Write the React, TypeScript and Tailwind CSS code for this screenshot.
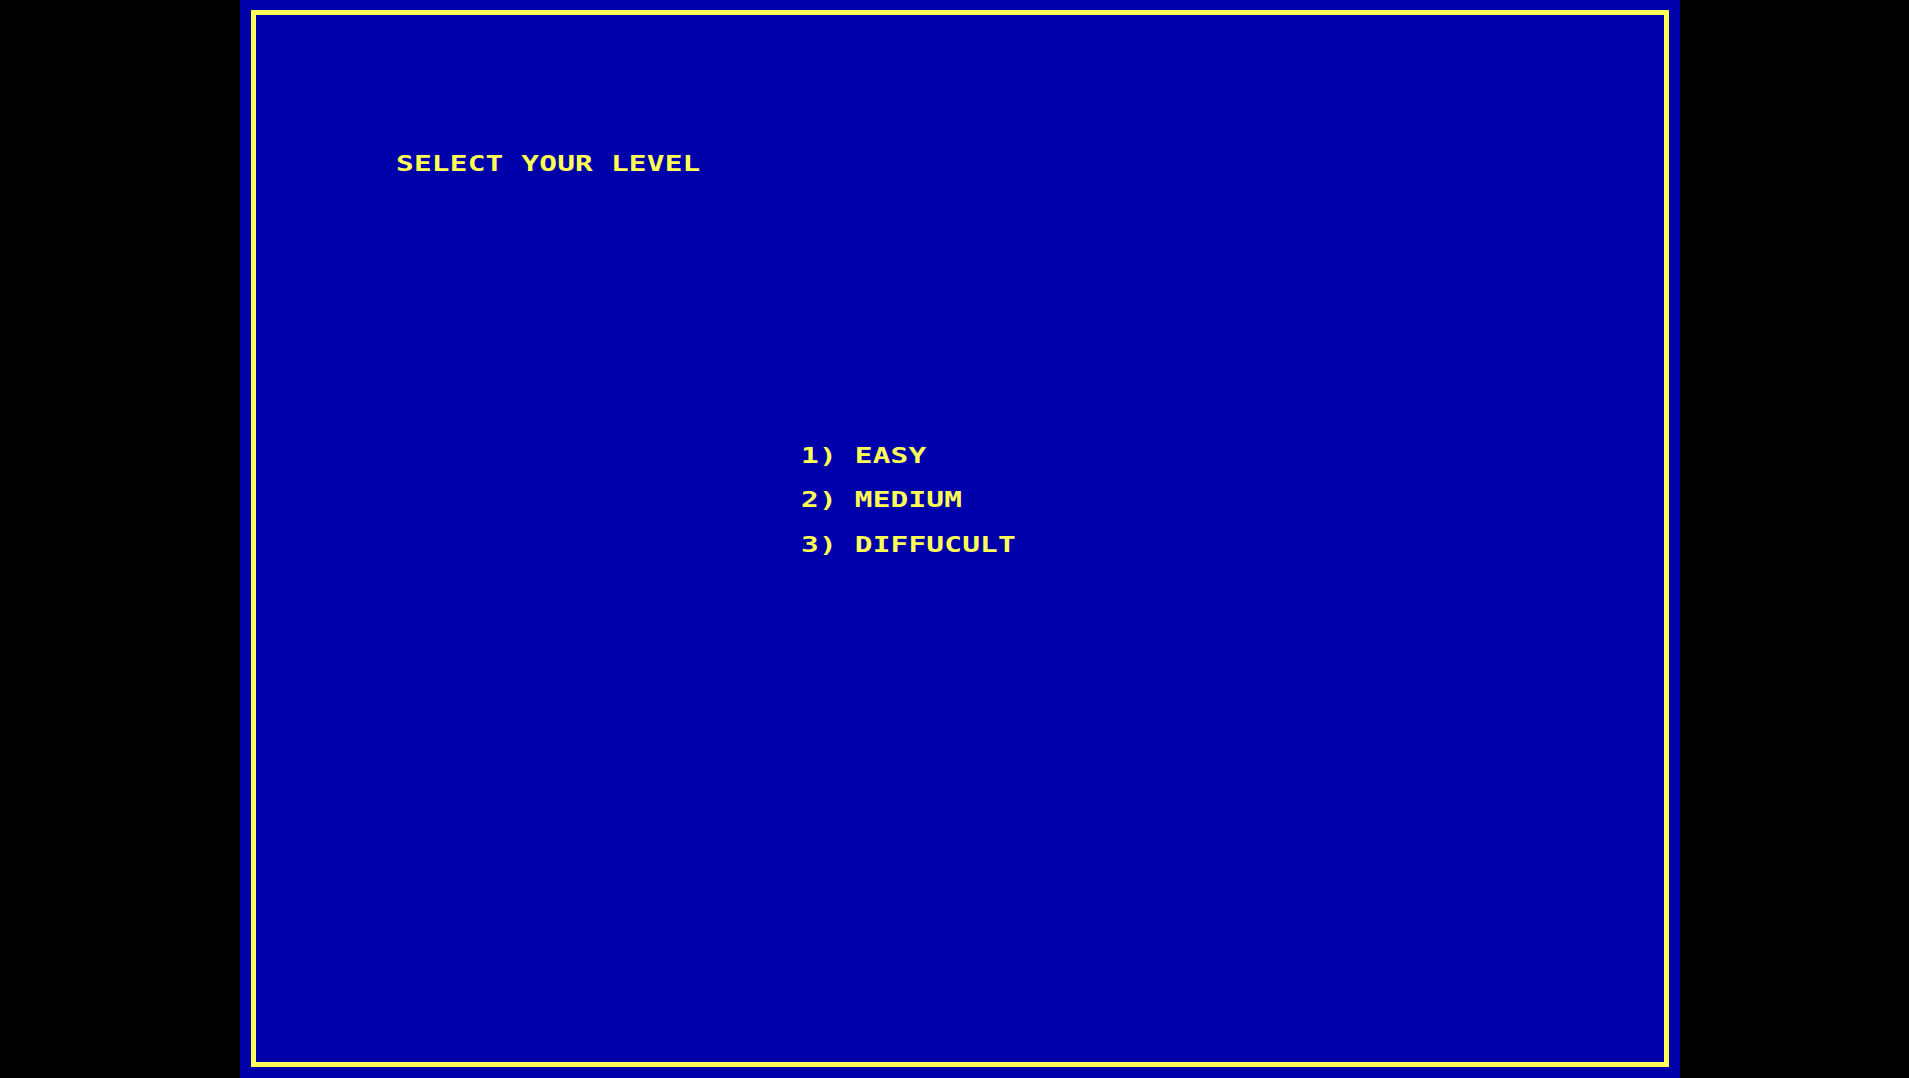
const LEVELS = ["1) EASY", "2) MEDIUM", "3) DIFFUCULT"];

const Line = ({ text }: { text: string }) => (
  <div className="h-[44.5px] leading-[44px] whitespace-pre">
    <span className="inline-block origin-left scale-x-[1.4] tracking-[0.15px]">{text}</span>
  </div>
);

export default function App() {
  return (
    <div className="w-full h-[1078px] bg-black overflow-hidden">
      <div className="ml-[240px] w-[1440px] h-full bg-[#0000aa] pt-[10px] px-[11px] pb-[11px]">
        <div
          className="h-full border-[5px] border-[#ffff55] text-[#ffff55] text-[21px] font-bold"
          style={{ fontFamily: '"DejaVu Sans Mono", "Liberation Mono", monospace' }}
        >
          <div className="pt-[127px] pl-[140px]">
            <Line text="SELECT YOUR LEVEL" />
          </div>
          <div className="mt-[247px] pl-[545px]">
            {LEVELS.map((l) => (
              <Line key={l} text={l} />
            ))}
          </div>
        </div>
      </div>
    </div>
  );
}
